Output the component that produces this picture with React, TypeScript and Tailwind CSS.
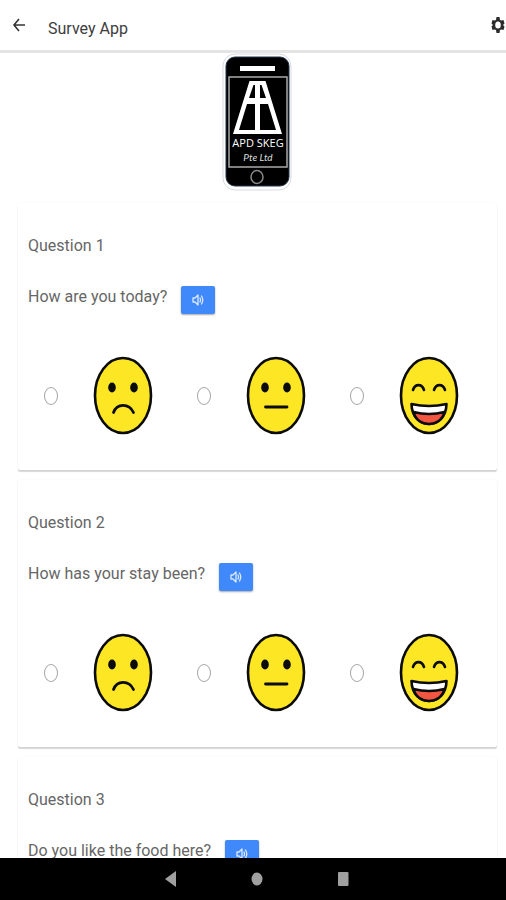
import { useState } from "react";

type Mood = "sad" | "neutral" | "happy";

const MOODS: Mood[] = ["sad", "neutral", "happy"];

const QUESTIONS = [
  { id: 1, prompt: "How are you today?" },
  { id: 2, prompt: "How has your stay been?" },
  { id: 3, prompt: "Do you like the food here?" },
];

function Face({ mood }: { mood: Mood }) {
  return (
    <svg viewBox="0 0 60 80" className="h-20 w-15" fill="none" stroke="#0b0b0b" aria-hidden="true">
      <ellipse cx="30" cy="39.500" rx="28" ry="37.500" fill="#fde725" strokeWidth="2.6" />
      {mood !== "happy" && (
        <g fill="#0b0b0b" stroke="none">
          <ellipse cx="19" cy="31.500" rx="3.8" ry="5" />
          <ellipse cx="41" cy="31.500" rx="3.8" ry="5" />
        </g>
      )}
      {mood === "sad" && <path d="M20.500 56.500C24 47 36 47 40.500 56.500" strokeWidth="2.800" strokeLinecap="round" />}
      {mood === "neutral" && <path d="M19.500 51H41" strokeWidth="2.800" strokeLinecap="round" />}
      {mood === "happy" && (
        <>
          <path d="M14 34C16 27.500 23 27.500 25 34M35 34C37 27.500 44 27.500 46 34" strokeWidth="2.600" strokeLinecap="round" />
          <path d="M12.500 48Q30 52 47.500 48C47 74.500 13 74.500 12.500 48Z" fill="#fff" strokeWidth="2.600" strokeLinejoin="round" />
          <path d="M14.500 56Q30 60 45.500 56C42 72 18 72 14.500 56Z" fill="#f25540" strokeWidth="2.600" strokeLinejoin="round" />
        </>
      )}
    </svg>
  );
}

function Logo() {
  return (
    <svg viewBox="0 0 70 138" className="h-[138px] w-[70px]" role="img" aria-label="APD SKEG Pte Ltd">
      <rect x="1" y="1" width="68" height="136" rx="12" fill="#fff" stroke="#d9dbe3" />
      <rect x="4" y="4" width="63" height="129" rx="9" fill="#000" stroke="#27364d" />
      <rect x="18" y="13" width="35" height="5" fill="#fff" />
      <rect x="7" y="24" width="58" height="90" fill="none" stroke="#aaa" strokeWidth="1.500" />
      <path
        fill="#fff"
        fillRule="evenodd"
        d="M27.500 28H43.500L60 81H11ZM31.500 32L27 45H33V32ZM38 32V45H44L39.500 32ZM25 51L17 77H33V51ZM38 51V77H54L46 51Z"
      />
      <text x="36" y="94" textAnchor="middle" fill="#fff" fontSize="11" fontFamily="'Open Sans', sans-serif">
        APD SKEG
      </text>
      <text x="36" y="108" textAnchor="middle" fill="#ddd" fontSize="10" fontStyle="italic" fontFamily="Lato, sans-serif">
        Pte Ltd
      </text>
      <ellipse cx="35" cy="124" rx="6" ry="6.500" fill="none" stroke="#888" strokeWidth="1.500" />
    </svg>
  );
}

function SpeakButton() {
  return (
    <button
      type="button"
      aria-label="Read question aloud"
      className="mt-px flex h-7 w-[34px] shrink-0 items-center justify-center rounded-xs bg-[#4089fb] shadow-[0_1px_2px_rgba(0,0,0,0.35)]"
    >
      <svg viewBox="0 0 12 14" className="h-3.5 w-3" fill="none" stroke="#dbe8ff" strokeWidth="1.300" strokeLinecap="round" aria-hidden="true">
        <path d="M1 5H3L6 2V12L3 9H1Z" strokeLinejoin="round" />
        <path d="M8 5Q9 7 8 9M9.500 3Q12 7 9.500 11" />
      </svg>
    </button>
  );
}

function QuestionCard({ id, prompt }: { id: number; prompt: string }) {
  const [answer, setAnswer] = useState<Mood | null>(null);
  return (
    <section className="rounded-xs bg-white px-2.5 pt-[31px] pb-[34px] shadow-[0_2px_1px_rgba(0,0,0,0.16),0_0_2px_rgba(0,0,0,0.06)]">
      <h2 className="leading-6">Question {id}</h2>
      <div className="mt-[27px] flex h-[30px] items-start gap-3.5">
        <p className="leading-6">{prompt}</p>
        <SpeakButton />
      </div>
      <div className="mt-[41px] grid grid-cols-3">
        {MOODS.map((mood) => (
          <label key={mood} className="flex items-center gap-[35px] pl-4">
            <input
              type="radio"
              name={`question-${id}`}
              aria-label={mood}
              checked={answer === mood}
              onChange={() => setAnswer(mood)}
              className="h-[18px] w-3.5 shrink-0 appearance-none rounded-[50%] border-[1.5px] border-[#a4a4a4] bg-white checked:bg-[#4089fb]"
            />
            <Face mood={mood} />
          </label>
        ))}
      </div>
    </section>
  );
}

export default function App() {
  return (
    <div className="flex h-screen flex-col overflow-hidden bg-white font-[Roboto,sans-serif] text-base text-[#666]">
      <header className="flex h-[53px] shrink-0 items-center border-b-3 border-[#e4e4e4] pl-3">
        <button type="button" aria-label="Back" className="text-[#333]">
          <svg viewBox="0 0 14 16" className="h-4 w-3.5" fill="none" stroke="currentColor" strokeWidth="1.600" aria-hidden="true">
            <path d="M13 8H2M7 2L2 8L7 14" />
          </svg>
        </button>
        <h1 className="ml-[22px] grow pt-2 leading-6 text-[#3d3d3d]">Survey App</h1>
        <button type="button" aria-label="Settings" className="pr-px text-[#2b2b2b]">
          <svg viewBox="0 0 14 18" className="h-[18px] w-3.5" aria-hidden="true">
            <path
              fill="currentColor"
              fillRule="evenodd"
              d="M5.500 1H8.500L9 4L10.500 4.500L12.500 4L13.500 7.500L12 9L13.500 10.500L12.500 14L10.500 13.500L9 14L8.500 17H5.500L5 14L3.500 13.500L1.500 14L0.500 10.500L2 9L0.500 7.500L1.500 4L3.500 4.500L5 4ZM7 5.500A2.800 3.500 0 1 0 7 12.500A2.800 3.500 0 1 0 7 5.500Z"
            />
          </svg>
        </button>
      </header>
      <main className="min-h-0 grow overflow-y-auto [scrollbar-width:none]">
        <div className="flex justify-center pl-2">
          <Logo />
        </div>
        <div className="mt-3 mr-[9px] ml-[18px] flex flex-col gap-2.5 pb-2.5">
          {QUESTIONS.map((q) => (
            <QuestionCard key={q.id} id={q.id} prompt={q.prompt} />
          ))}
        </div>
      </main>
      <nav className="flex h-[42px] shrink-0 items-center justify-center gap-[74px] bg-black pl-2 text-[#a0a0a0]">
        <button type="button" aria-label="System back">
          <svg viewBox="0 0 12 16" className="h-4 w-3" fill="currentColor" aria-hidden="true">
            <path d="M11 0V16L0 8Z" />
          </svg>
        </button>
        <button type="button" aria-label="Home">
          <svg viewBox="0 0 12 16" className="h-4 w-3" fill="currentColor" aria-hidden="true">
            <ellipse cx="6" cy="8" rx="5.500" ry="6.500" />
          </svg>
        </button>
        <button type="button" aria-label="Recent apps">
          <svg viewBox="0 0 12 16" className="h-4 w-3" fill="currentColor" aria-hidden="true">
            <rect x="1" y="1" width="10.500" height="14" rx="1" />
          </svg>
        </button>
      </nav>
    </div>
  );
}
